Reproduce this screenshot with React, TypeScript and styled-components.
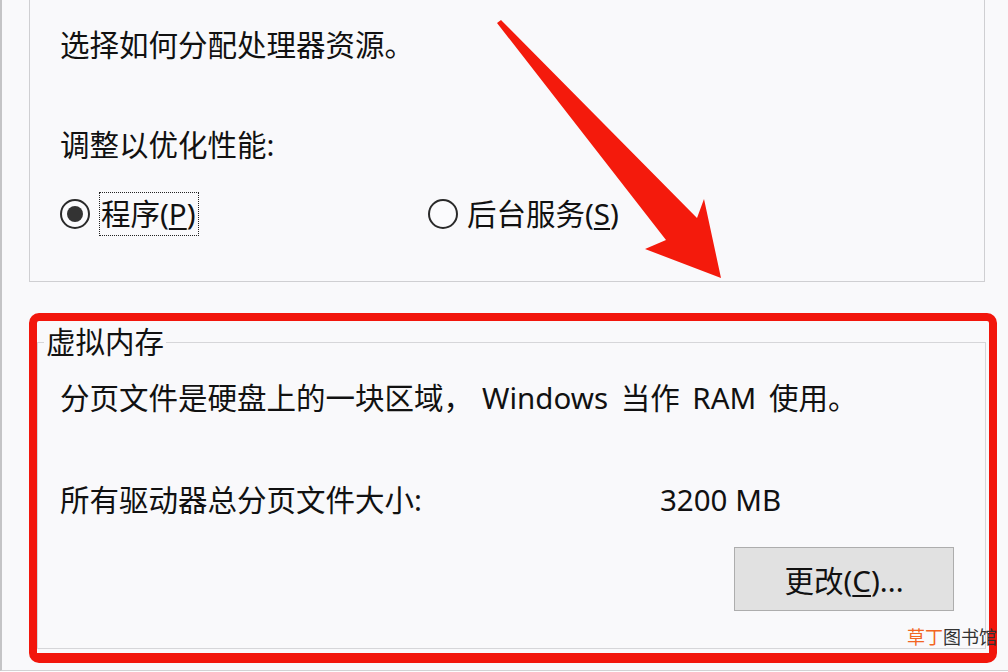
import React from 'react';
import styled, { createGlobalStyle } from 'styled-components';

const GlobalStyle = createGlobalStyle`
  html, body {
    margin: 0;
    padding: 0;
    background: #fdfdfe;
  }
  body {
    font-family: "Noto Sans", "Noto Sans CJK SC", sans-serif;
    color: #111;
  }
`;

const App: React.FC = () => {
  return (
    <Page>
      <GlobalStyle />
      <Dialog>
        <TopGroup>
          <Caption>选择如何分配处理器资源。</Caption>
          <Caption $gap={60}>调整以优化性能:</Caption>
          <RadioRow>
            <RadioOption>
              <RadioCircle $checked />
              <FocusLabel>
                程序(<u>P</u>)
              </FocusLabel>
            </RadioOption>
            <RadioOption>
              <RadioCircle />
              <PlainLabel>
                后台服务(<u>S</u>)
              </PlainLabel>
            </RadioOption>
          </RadioRow>
        </TopGroup>

        <GroupBox>
          <Legend>虚拟内存</Legend>
          <GroupBody>
            <Caption $gap={19} $wordGap={5}>
              分页文件是硬盘上的一块区域，<Latin>Windows</Latin> 当作 RAM 使用。
            </Caption>
            <SizeRow>
              <span>所有驱动器总分页文件大小:</span>
              <span>3200 MB</span>
            </SizeRow>
            <ButtonRow>
              <ChangeButton>
                更改(<u>C</u>)...
              </ChangeButton>
            </ButtonRow>
          </GroupBody>
        </GroupBox>
      </Dialog>

      <Highlight />
      <Arrow viewBox="490 15 240 270">
        <polygon points="497,23 501,20 697,218 704,199 721,278 645,249 666,240" fill="#f41a0c" />
      </Arrow>
      <Watermark>
        <em>草丁</em>图书馆
      </Watermark>
    </Page>
  );
};

export default App;

const Page = styled.div`
  position: relative;
  width: 1008px;
  height: 672px;
  overflow: hidden;
  background: #fdfdfe;
`;

const Dialog = styled.div`
  height: 671px;
  box-sizing: border-box;
  border-left: 2px solid #c4c4c6;
  border-bottom: 1px solid #d2d2d4;
  background: #f9f9fb;
  display: flex;
  flex-direction: column;
  font-size: 29.5px;
`;

const TopGroup = styled.div`
  margin-left: 27px;
  width: 956px;
  height: 282px;
  box-sizing: border-box;
  border: 1px solid #cfcfd2;
  border-top: none;
  padding: 25px 0 0 30px;
`;

const Caption = styled.div<{ $gap?: number; $wordGap?: number }>`
  line-height: 40px;
  margin-top: ${({ $gap }) => $gap ?? 0}px;
  word-spacing: ${({ $wordGap }) => $wordGap ?? 0}px;
  white-space: nowrap;
`;

const Latin = styled.span`
  margin-left: 9px;
`;

const RadioRow = styled.div`
  display: grid;
  grid-template-columns: 368px auto;
  align-items: center;
  margin-top: 27px;
  height: 44px;
`;

const RadioOption = styled.div`
  display: flex;
  align-items: center;
  gap: 9px;
`;

const RadioCircle = styled.span<{ $checked?: boolean }>`
  width: 30px;
  height: 30px;
  box-sizing: border-box;
  border-radius: 50%;
  border: 2px solid #2a2a2a;
  background: #fbfbfd;
  display: flex;
  align-items: center;
  justify-content: center;
  &::after {
    content: '';
    width: 16px;
    height: 16px;
    border-radius: 50%;
    background: #333;
    display: ${({ $checked }) => ($checked ? 'block' : 'none')};
  }
`;

const FocusLabel = styled.span`
  border: 1px dotted #222;
  padding: 1px 2px 1px 1px;
  line-height: 40px;
  white-space: nowrap;
  u {
    text-underline-offset: 3px;
  }
`;

const PlainLabel = styled.span`
  line-height: 40px;
  white-space: nowrap;
  u {
    text-underline-offset: 3px;
  }
`;

const GroupBox = styled.fieldset`
  margin: 43px 0 0 35px;
  width: 949px;
  box-sizing: border-box;
  border: 1px solid #d6d6d9;
  padding: 0 31px 37px 6px;
  min-inline-size: 0;
`;

const Legend = styled.legend`
  padding: 0 2px;
  line-height: 34px;
  font-size: 29.5px;
`;

const GroupBody = styled.div`
  padding-left: 16px;
`;

const SizeRow = styled.div`
  display: grid;
  grid-template-columns: 600px auto;
  line-height: 40px;
  margin-top: 62px;
`;

const ButtonRow = styled.div`
  display: flex;
  justify-content: flex-end;
  margin-top: 27px;
`;

const ChangeButton = styled.button`
  width: 220px;
  height: 64px;
  box-sizing: border-box;
  border: 1px solid #adadad;
  background: #e1e1e1;
  font-family: inherit;
  font-size: 29.5px;
  color: #111;
  padding: 0;
  u {
    text-underline-offset: 3px;
  }
`;

const Highlight = styled.div`
  position: absolute;
  left: 29px;
  top: 313px;
  width: 968px;
  height: 350px;
  box-sizing: border-box;
  border: 8px solid #f2160c;
  border-bottom-width: 10px;
  border-radius: 10px;
  pointer-events: none;
`;

const Arrow = styled.svg`
  position: absolute;
  left: 490px;
  top: 15px;
  width: 240px;
  height: 270px;
  pointer-events: none;
`;

const Watermark = styled.div`
  position: absolute;
  right: 11px;
  top: 624px;
  font-family: "Noto Sans CJK SC", sans-serif;
  font-size: 18px;
  line-height: 24px;
  color: #333;
  em {
    font-style: normal;
    color: #f26522;
  }
`;
